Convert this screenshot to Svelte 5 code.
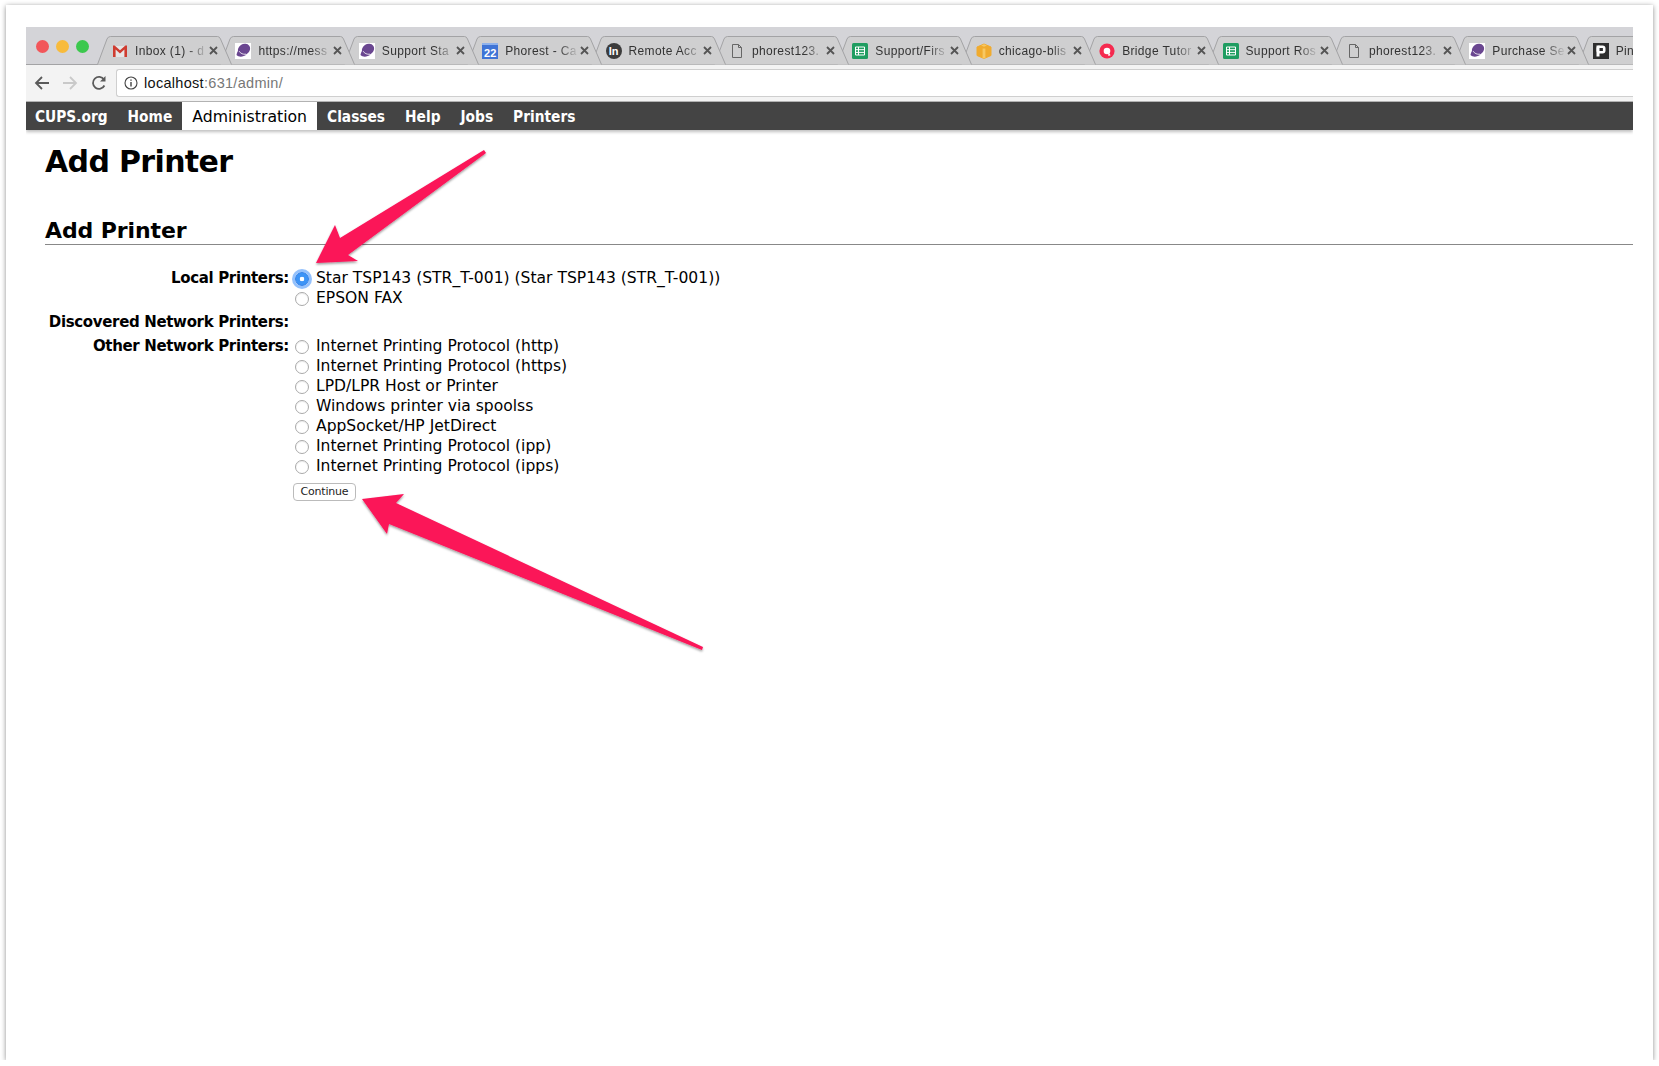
<script>
	const tabs = [
		{ icon: "gmail", title: "Inbox (1) - d" },
		{ icon: "ball", title: "https://mess" },
		{ icon: "ball", title: "Support Sta" },
		{ icon: "cal", title: "Phorest - Ca" },
		{ icon: "in", title: "Remote Acc" },
		{ icon: "doc", title: "phorest123." },
		{ icon: "sheet", title: "Support/Firs" },
		{ icon: "box", title: "chicago-blis" },
		{ icon: "ring", title: "Bridge Tutor" },
		{ icon: "sheet", title: "Support Ros" },
		{ icon: "doc", title: "phorest123." },
		{ icon: "ball", title: "Purchase Se" },
		{ icon: "p", title: "Pin" }
	];

	const navItems = ["CUPS.org", "Home", "Administration", "Classes", "Help", "Jobs", "Printers"];

	const localPrinters = ["Star TSP143 (STR_T-001) (Star TSP143 (STR_T-001))", "EPSON FAX"];
	const otherPrinters = [
		"Internet Printing Protocol (http)",
		"Internet Printing Protocol (https)",
		"LPD/LPR Host or Printer",
		"Windows printer via spoolss",
		"AppSocket/HP JetDirect",
		"Internet Printing Protocol (ipp)",
		"Internet Printing Protocol (ipps)"
	];
</script>

<div class="frame">
	<div class="browser">
		<div class="tabstrip">
			<div class="lights">
				<span class="light red"></span>
				<span class="light yellow"></span>
				<span class="light green"></span>
			</div>
			{#each tabs as tab, i}
				<div class="tab" style="z-index: {tabs.length - i}">
					<svg class="tabshape" width="146" height="29" viewBox="0 0 146 29">
						<path d="M0.5 28.5 L10 3 Q11 0.5 13.5 0.5 H120.5 Q122.5 0.5 123.5 3 L134.5 28.5" fill="#cfcfd0" stroke="#a3a3a5" />
					</svg>
					<span class="favicon">
						{#if tab.icon == "gmail"}
							<svg width="16" height="16" viewBox="0 0 16 16">
								<rect x="1" y="3" width="14" height="11" fill="#e6e6e6" />
								<path d="M1 14 V2.5 H2.6 L8 7.2 L13.4 2.5 H15 V14 H12.4 V6.6 L8 10.4 L3.6 6.6 V14 Z" fill="#cf3c30" />
							</svg>
						{:else if tab.icon == "ball"}
							<svg width="16" height="16" viewBox="0 0 16 16">
								<rect width="16" height="16" fill="#fff" />
								<ellipse cx="9" cy="6.4" rx="6.4" ry="5.4" transform="rotate(-35 9 6.4)" fill="#6a4690" />
								<path d="M1.5 12 C2 9 3 7.5 4.5 6 C4.5 9 7 11.5 11.5 11.5 C8.5 14 4 14.5 1.5 12 Z" fill="#6a4690" />
								<path d="M4.2 8.2 C5.5 10.5 8 11.6 11 11.2" fill="none" stroke="#fff" stroke-width="0.8" />
							</svg>
						{:else if tab.icon == "cal"}
							<span class="cal">22</span>
						{:else if tab.icon == "in"}
							<span class="incircle">In</span>
						{:else if tab.icon == "doc"}
							<svg width="16" height="16" viewBox="0 0 16 16" fill="none" stroke="#666" stroke-width="1">
								<path d="M3.5 1.5 H9.5 L12.5 4.5 V14.5 H3.5 Z M9.5 1.5 V4.5 H12.5" />
							</svg>
						{:else if tab.icon == "sheet"}
							<svg width="16" height="16" viewBox="0 0 16 16">
								<rect width="16" height="16" rx="1.5" fill="#1f9d61" />
								<path d="M3.5 4 H12.5 V12 H3.5 Z M3.5 6.7 H12.5 M3.5 9.4 H12.5 M6.5 4 V12" fill="none" stroke="#fff" stroke-width="1" />
							</svg>
						{:else if tab.icon == "box"}
							<svg width="16" height="16" viewBox="0 0 16 16">
								<path d="M1 4 L8 1 L15 4 V12.5 L8 15.5 L1 12.5 Z" fill="#f0ab2e" stroke="#f0ab2e" stroke-linejoin="round" />
								<path d="M5.2 2.4 L8 1.2 L10.8 2.4 L8 3.8 Z M6.6 5.4 L9.4 5.4 V15 L8 15.5 L6.6 15 Z" fill="#f8c862" />
							</svg>
						{:else if tab.icon == "ring"}
							<svg width="16" height="16" viewBox="0 0 16 16">
								<circle cx="8" cy="8" r="7.6" fill="#f52a4f" />
								<circle cx="8" cy="8" r="3.3" fill="#fff" />
								<path d="M9 8.6 L11.6 12.2 L9.4 13 Z" fill="#fff" />
							</svg>
						{:else}
							<span class="pbox">
								<svg width="16" height="16" viewBox="0 0 16 16">
									<rect width="16" height="16" fill="#2f2f2f" />
									<rect x="3.5" y="2.5" width="9" height="8" rx="3" fill="#fff" />
									<rect x="3.5" y="2.5" width="3" height="11" fill="#fff" />
									<rect x="6.5" y="5" width="3.4" height="3" fill="#2f2f2f" />
								</svg>
							</span>
						{/if}
					</span>
					<span class="tabtitle">{tab.title}</span>
					<svg class="close" width="9" height="9" viewBox="0 0 9 9">
						<path d="M1 1 L8 8 M8 1 L1 8" stroke="#555" stroke-width="1.8" />
					</svg>
				</div>
			{/each}
		</div>

		<div class="toolbar">
			<svg class="navicon" width="16" height="16" viewBox="0 0 16 16" fill="none" stroke="#5a5a5a" stroke-width="1.8">
				<path d="M15 8 H2 M8 2 L2 8 L8 14" />
			</svg>
			<svg class="navicon" width="16" height="16" viewBox="0 0 16 16" fill="none" stroke="#c9c9c9" stroke-width="1.8">
				<path d="M1 8 H14 M8 2 L14 8 L8 14" />
			</svg>
			<svg class="navicon reload" width="16" height="16" viewBox="0 0 16 16" fill="none" stroke="#5a5a5a" stroke-width="1.8">
				<path d="M13.4 10.5 A6 6 0 1 1 13 4.6" />
				<path d="M14.5 1 V6.5 H9 Z" fill="#5a5a5a" stroke="none" />
			</svg>
			<div class="omnibox">
				<svg width="14" height="14" viewBox="0 0 14 14" fill="none" stroke="#444" stroke-width="1.1">
					<circle cx="7" cy="7" r="6" />
					<path d="M7 6 V10.5 M7 3.4 V4.8" stroke-width="1.4" />
				</svg>
				<span class="url"><span class="host">localhost</span>:631/admin/</span>
			</div>
		</div>

		<nav class="navbar">
			{#each navItems as item}
				<a href="#top" class:active={item == "Administration"}>{item}</a>
			{/each}
		</nav>

		<main class="page">
			<h1>Add Printer</h1>
			<h2>Add Printer</h2>

			<form class="printerform">
				<div class="label">Local Printers:</div>
				<div class="options">
					{#each localPrinters as printer, i}
						<label class="option">
							<input type="radio" name="printer" checked={i == 0} />
							<span>{printer}</span>
						</label>
					{/each}
				</div>

				<div class="label discovered">Discovered Network Printers:</div>
				<div class="options discovered"></div>

				<div class="label">Other Network Printers:</div>
				<div class="options">
					{#each otherPrinters as printer}
						<label class="option">
							<input type="radio" name="printer" />
							<span>{printer}</span>
						</label>
					{/each}
				</div>

				<div></div>
				<div><button type="button" class="continue">Continue</button></div>
			</form>
		</main>
	</div>

	<!-- annotation arrows on top of the screenshot -->
	<svg class="arrows" width="1659" height="1066" viewBox="0 0 1659 1066">
		<defs>
			<filter id="arrowshadow" x="-10%" y="-10%" width="120%" height="120%">
				<feDropShadow dx="0" dy="1.5" stdDeviation="1" flood-color="#000" flood-opacity="0.4" />
			</filter>
		</defs>
		<path d="M316 263 L335 225 L340 238 L484 150 L486 153 L348 255 L358 261 Z" fill="#fb1459" filter="url(#arrowshadow)" />
		<path d="M362 499 L404 494 L396 503 L703 647 L702 650 L389 524 L387 534 Z" fill="#fb1459" filter="url(#arrowshadow)" />
	</svg>
</div>

<style>
	:global(body) {
		margin: 0;
		background: #fff;
	}

	.frame {
		position: relative;
		width: 1647px;
		height: 1055px;
		margin: 5px 0 0 6px;
		padding: 22px 0 0 20px;
		box-sizing: border-box;
		background: #fff;
		box-shadow: 0 1px 5px rgba(0, 0, 0, 0.45);
		overflow: hidden;
		font-family: "DejaVu Sans", Verdana, sans-serif;
		color: #000;
	}

	.browser {
		width: 1607px;
		overflow: hidden;
	}

	.tabstrip {
		display: flex;
		height: 38px;
		box-sizing: border-box;
		padding-top: 9px;
		background: #d4d4d8;
		border-bottom: 1px solid #a3a3a5;
	}

	.lights {
		display: flex;
		flex: none;
		width: 82px;
		box-sizing: border-box;
		gap: 7px;
		padding: 4px 0 0 10px;
	}

	.light {
		width: 13px;
		height: 13px;
		border-radius: 50%;
	}

	.red { background: #f2565a; }
	.yellow { background: #f8bb3c; }
	.green { background: #3cc84e; }

	.tab {
		position: relative;
		display: flex;
		flex: none;
		align-items: center;
		width: 123.4px;
		height: 28px;
		box-sizing: border-box;
		padding-right: 13px;
		font-family: "Liberation Sans", Arial, sans-serif;
		font-size: 12px;
		letter-spacing: 0.35px;
		color: #333;
	}

	.tabshape {
		position: absolute;
		left: -11px;
		top: 0;
	}

	.favicon {
		position: relative;
		display: flex;
		flex: none;
		width: 16px;
		height: 16px;
		margin: 2px 7px 0 4px;
	}

	.cal {
		width: 16px;
		height: 16px;
		box-sizing: border-box;
		padding-top: 3px;
		background: #3f74d6;
		border-top: 2px solid #8fb2ec;
		font-size: 11px;
		font-weight: bold;
		letter-spacing: 0;
		line-height: 11px;
		text-align: center;
		color: #fff;
	}

	.incircle {
		width: 16px;
		height: 16px;
		border-radius: 50%;
		background: #3c3c3c;
		font-size: 11px;
		font-weight: bold;
		letter-spacing: 0;
		line-height: 16px;
		text-align: center;
		color: #fff;
	}

	.pbox {
		display: flex;
		width: 16px;
		height: 16px;
	}

	.tabtitle {
		position: relative;
		flex: 1;
		min-width: 0;
		margin-top: 1px;
		overflow: hidden;
		white-space: nowrap;
		-webkit-mask-image: linear-gradient(to right, #000 74%, rgba(0, 0, 0, 0.1) 100%);
		mask-image: linear-gradient(to right, #000 74%, rgba(0, 0, 0, 0.1) 100%);
	}

	.close {
		position: relative;
		flex: none;
		margin-left: 3px;
	}

	.toolbar {
		display: flex;
		align-items: center;
		height: 37px;
		box-sizing: border-box;
		padding: 0 0 1px 8px;
		gap: 12px;
		background: #f3f3f3;
		border-bottom: 1px solid #b5b5b5;
	}

	.navicon {
		flex: none;
	}

	.reload {
		margin-left: 1px;
	}

	.omnibox {
		display: flex;
		flex: 1;
		align-items: center;
		gap: 6px;
		height: 28px;
		box-sizing: border-box;
		padding-left: 7px;
		margin-left: -3px;
		background: #fff;
		border: 1px solid #cfcfcf;
		border-right: none;
		border-radius: 3px 0 0 3px;
	}

	.url {
		font-family: "Liberation Sans", Arial, sans-serif;
		font-size: 14.5px;
		letter-spacing: 0.3px;
		color: #777;
	}

	.host {
		color: #111;
	}

	.navbar {
		display: flex;
		height: 28px;
		background: #444;
		box-shadow: 0 2px 3px rgba(0, 0, 0, 0.25);
	}

	.navbar a {
		padding: 2px 10px 0;
		font-family: "DejaVu Sans Condensed", "DejaVu Sans", sans-serif;
		font-size: 15.3px;
		font-weight: bold;
		line-height: 26px;
		text-decoration: none;
		color: #fff;
	}

	.navbar a:first-child {
		padding-left: 9px;
	}

	.navbar a.active {
		background: #fff;
		font-family: "DejaVu Sans", sans-serif;
		font-size: 15.7px;
		font-weight: normal;
		color: #000;
	}

	.page {
		padding: 13px 0 0 19px;
	}

	h1 {
		margin: 0;
		font-size: 30px;
		line-height: 38px;
		letter-spacing: -0.65px;
	}

	h2 {
		margin: 36px 0 0;
		font-size: 22px;
		line-height: 27px;
		letter-spacing: -0.1px;
		border-bottom: 1px solid #888;
	}

	.printerform {
		display: grid;
		grid-template-columns: 244px 1fr;
		column-gap: 4px;
		margin-top: 23px;
		font-size: 15.55px;
		line-height: 20px;
	}

	.label {
		font-size: 15px;
		font-weight: bold;
		letter-spacing: -0.34px;
		text-align: right;
		white-space: nowrap;
	}

	.discovered {
		margin-top: 1px;
	}

	.options {
		min-height: 20px;
		margin-bottom: 3px;
	}

	.options.discovered {
		margin-bottom: 4px;
	}

	.option {
		display: flex;
		align-items: center;
		height: 20px;
		gap: 7px;
	}

	input[type="radio"] {
		appearance: none;
		flex: none;
		width: 14px;
		height: 14px;
		margin: 2px 0 0 2px;
		border: 1px solid #aaa;
		border-radius: 50%;
		background: #fff;
		box-shadow: inset 0 1px 1px rgba(0, 0, 0, 0.08);
	}

	input[type="radio"]:checked {
		border-color: #2f7fe8;
		background: radial-gradient(circle, #fff 0 2px, #3d94f6 2.6px);
		box-shadow: 0 0 0 3px rgba(90, 160, 250, 0.65);
	}

	.continue {
		display: block;
		width: 63px;
		height: 18px;
		margin: 4px 0 0 0;
		padding: 0;
		font-family: "DejaVu Sans", Verdana, sans-serif;
		font-size: 11px;
		letter-spacing: -0.2px;
		line-height: 16px;
		color: #222;
		background: #fff;
		border: 1px solid #bbb;
		border-radius: 4px;
	}

	.arrows {
		position: absolute;
		left: -6px;
		top: -5px;
		z-index: 20;
		pointer-events: none;
	}
</style>
